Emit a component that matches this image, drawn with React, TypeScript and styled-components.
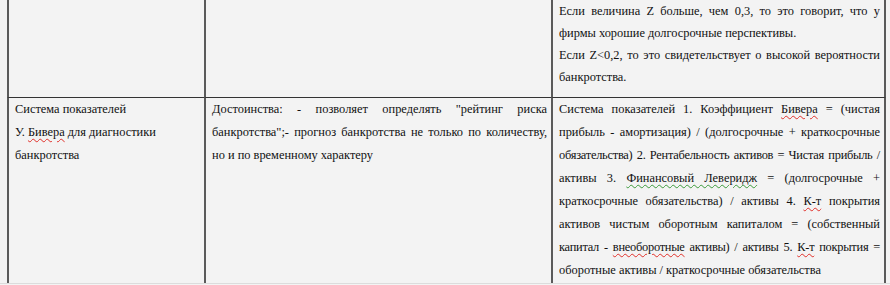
import React from "react";
import styled, { createGlobalStyle } from "styled-components";

const GlobalStyle = createGlobalStyle`
  html, body {
    margin: 0;
    padding: 0;
    background: #f3f3f3;
  }
`;

const Page = styled.div`
  display: flex;
  flex-direction: column;
  width: 890px;
  height: 285px;
  overflow: hidden;
  background: #f3f3f3;
  font-family: "Liberation Serif", "Times New Roman", serif;
  font-size: 12.4px;
  color: #111;
`;

const Table = styled.div`
  display: grid;
  grid-template-columns: 197px 347px 335px;
  grid-template-rows: 97px 186px;
  margin-left: 7px;
`;

const Cell = styled.div<{ $bottom?: boolean; $last?: boolean }>`
  box-sizing: border-box;
  border-left: 2px solid #5a5a5a;
  border-right: ${(p) => (p.$last ? "2px solid #5a5a5a" : "none")};
  border-top: ${(p) => (p.$bottom ? "1px solid #333" : "none")};
  padding: 0 4px 0 6px;
  line-height: ${(p) => (p.$bottom ? "23px" : "22px")};
`;

const Line = styled.span<{ $justify?: boolean; $tight?: boolean }>`
  display: block;
  text-align: ${(p) => (p.$justify ? "justify" : "left")};
  text-align-last: ${(p) => (p.$justify ? "justify" : "left")};
  letter-spacing: ${(p) => (p.$tight ? "-0.25px" : "0")};
`;

const Squiggle = styled.span<{ $color: string }>`
  text-decoration: underline wavy ${(p) => p.$color};
  text-decoration-thickness: 1px;
  text-underline-offset: 2px;
`;

const BottomEdge = styled.div`
  height: 1px;
  background: #dcdcdc;
`;

const red = "#e0302a";
const green = "#3a9a3a";

export default function App() {
  return (
    <>
      <GlobalStyle />
      <Page>
        <Table>
          <Cell />
          <Cell />
          <Cell $last>
            <Line $justify>Если величина Z больше, чем 0,3, то это говорит, что у</Line>
            <Line>фирмы хорошие долгосрочные перспективы.</Line>
            <Line $justify>Если Z&lt;0,2, то это свидетельствует о высокой вероятности</Line>
            <Line>банкротства.</Line>
          </Cell>

          <Cell $bottom>
            <Line>Система показателей</Line>
            <Line>
              У. <Squiggle $color={red}>Бивера</Squiggle> для диагностики
            </Line>
            <Line>банкротства</Line>
          </Cell>
          <Cell $bottom>
            <Line $justify>Достоинства: - позволяет определять "рейтинг риска</Line>
            <Line $justify>банкротства";- прогноз банкротства не только по количеству,</Line>
            <Line>но и по временному характеру</Line>
          </Cell>
          <Cell $bottom $last>
            <Line $justify>
              Система показателей 1. Коэффициент <Squiggle $color={red}>Бивера</Squiggle> = (чистая
            </Line>
            <Line $justify>прибыль - амортизация) / (долгосрочные + краткосрочные</Line>
            <Line $justify $tight>
              обязательства) 2. Рентабельность активов = Чистая прибыль /
            </Line>
            <Line $justify>
              активы 3. <Squiggle $color={green}>Финансовый Леверидж</Squiggle> = (долгосрочные +
            </Line>
            <Line $justify>
              краткосрочные обязательства) / активы 4. <Squiggle $color={red}>К-т</Squiggle> покрытия
            </Line>
            <Line $justify>активов чистым оборотным капиталом = (собственный</Line>
            <Line $justify $tight>
              капитал - <Squiggle $color={red}>внеоборотные</Squiggle> активы) / активы 5.{" "}
              <Squiggle $color={red}>К-т</Squiggle> покрытия =
            </Line>
            <Line>оборотные активы / краткосрочные обязательства</Line>
          </Cell>
        </Table>
        <BottomEdge />
      </Page>
    </>
  );
}
